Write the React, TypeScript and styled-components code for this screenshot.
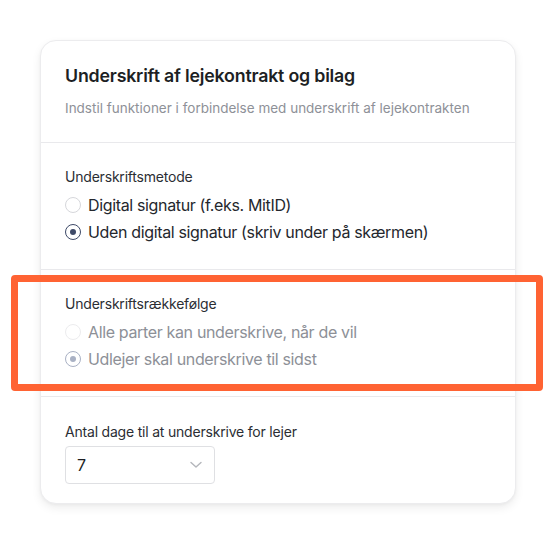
import React from 'react';
import styled, { createGlobalStyle } from 'styled-components';

const GlobalStyle = createGlobalStyle`
  html, body {
    margin: 0;
    padding: 0;
    background: #ffffff;
  }
  body {
    font-family: Inter, "Noto Sans", "Liberation Sans", sans-serif;
    -webkit-font-smoothing: antialiased;
  }
`;

const SCPage = styled.div`
  position: relative;
  width: 555px;
  height: 544px;
  padding: 40px 0 0 40px;
  box-sizing: border-box;
`;

const SCCard = styled.div`
  width: 476px;
  background: #ffffff;
  border: 1px solid #ececee;
  border-radius: 16px;
  box-shadow: 0 4px 10px rgba(0, 0, 0, 0.07), 0 1px 3px rgba(0, 0, 0, 0.04);
  box-sizing: border-box;
  overflow: hidden;
`;

const SCHeader = styled.div`
  padding: 23px 24px 24px;
  border-bottom: 1px solid #e9e9ec;
`;

const SCTitle = styled.h2`
  margin: 0;
  font-size: 17.8px;
  line-height: 24px;
  font-weight: 600;
  color: #1d1f24;
  letter-spacing: -0.2px;
`;

const SCSubtitle = styled.p`
  margin: 10px 0 0;
  font-size: 13.5px;
  line-height: 20px;
  color: #8e9198;
`;

const SCSection = styled.div<{ $last?: boolean }>`
  padding: ${(p) => (p.$last ? '25px 24px 19px' : '24px 24px 25px')};
  border-bottom: ${(p) => (p.$last ? 'none' : '1px solid #e9e9ec')};
`;

const SCLabel = styled.div`
  font-size: 14px;
  line-height: 20px;
  color: #2b2e34;
  letter-spacing: -0.2px;
`;

const SCRadioList = styled.div`
  display: flex;
  flex-direction: column;
  gap: 3px;
  margin-top: 6px;
`;

const SCRadioRow = styled.label<{ $disabled?: boolean }>`
  display: flex;
  align-items: center;
  gap: 7px;
  font-size: 16px;
  line-height: 24px;
  letter-spacing: -0.35px;
  color: ${(p) => (p.$disabled ? '#8d9097' : '#24272d')};
`;

const SCRadio = styled.span<{ $checked?: boolean; $disabled?: boolean }>`
  position: relative;
  width: 16px;
  height: 16px;
  border-radius: 50%;
  box-sizing: border-box;
  flex-shrink: 0;
  border: ${(p) =>
    p.$checked
      ? `1.5px solid ${p.$disabled ? '#a9b1c4' : '#3e4a68'}`
      : `1.5px solid ${p.$disabled ? '#ececee' : '#d6d7db'}`};
  &::after {
    content: '';
    display: ${(p) => (p.$checked ? 'block' : 'none')};
    position: absolute;
    left: 50%;
    top: 50%;
    width: 6px;
    height: 6px;
    border-radius: 50%;
    transform: translate(-50%, -50%);
    background: ${(p) => (p.$disabled ? '#a9b1c4' : '#3e4a68')};
  }
`;

const SCSelect = styled.div`
  display: flex;
  align-items: center;
  justify-content: space-between;
  width: 150px;
  height: 38px;
  margin-top: 4px;
  padding: 0 12px 0 11px;
  box-sizing: border-box;
  border: 1px solid #dfe0e3;
  border-radius: 4px;
  font-size: 16px;
  color: #1d1f24;
`;

const SCHighlight = styled.div`
  position: absolute;
  left: 11px;
  top: 275px;
  width: 532px;
  height: 116px;
  border: 7px solid #ff6333;
  border-radius: 4px;
  box-sizing: border-box;
  pointer-events: none;
`;

type Option = { text: string; checked?: boolean };

const RadioGroup = ({ options, disabled }: { options: Option[]; disabled?: boolean }) => (
  <SCRadioList>
    {options.map((o) => (
      <SCRadioRow key={o.text} $disabled={disabled}>
        <SCRadio $checked={o.checked} $disabled={disabled} />
        {o.text}
      </SCRadioRow>
    ))}
  </SCRadioList>
);

const Chevron = () => (
  <svg width="12" height="8" viewBox="0 0 12 8" fill="none">
    <path d="M1 1.5l5 4.5 5-4.5" stroke="#b4b6bb" strokeWidth="1.4" strokeLinecap="round" strokeLinejoin="round" />
  </svg>
);

const App = () => {
  return (
    <>
      <GlobalStyle />
      <SCPage>
        <SCCard>
          <SCHeader>
            <SCTitle>Underskrift af lejekontrakt og bilag</SCTitle>
            <SCSubtitle>Indstil funktioner i forbindelse med underskrift af lejekontrakten</SCSubtitle>
          </SCHeader>
          <SCSection>
            <SCLabel>Underskriftsmetode</SCLabel>
            <RadioGroup
              options={[
                { text: 'Digital signatur (f.eks. MitID)' },
                { text: 'Uden digital signatur (skriv under på skærmen)', checked: true },
              ]}
            />
          </SCSection>
          <SCSection>
            <SCLabel>Underskriftsrækkefølge</SCLabel>
            <RadioGroup
              disabled
              options={[
                { text: 'Alle parter kan underskrive, når de vil' },
                { text: 'Udlejer skal underskrive til sidst', checked: true },
              ]}
            />
          </SCSection>
          <SCSection $last>
            <SCLabel>Antal dage til at underskrive for lejer</SCLabel>
            <SCSelect>
              <span>7</span>
              <Chevron />
            </SCSelect>
          </SCSection>
        </SCCard>
        <SCHighlight />
      </SCPage>
    </>
  );
};

export default App;
